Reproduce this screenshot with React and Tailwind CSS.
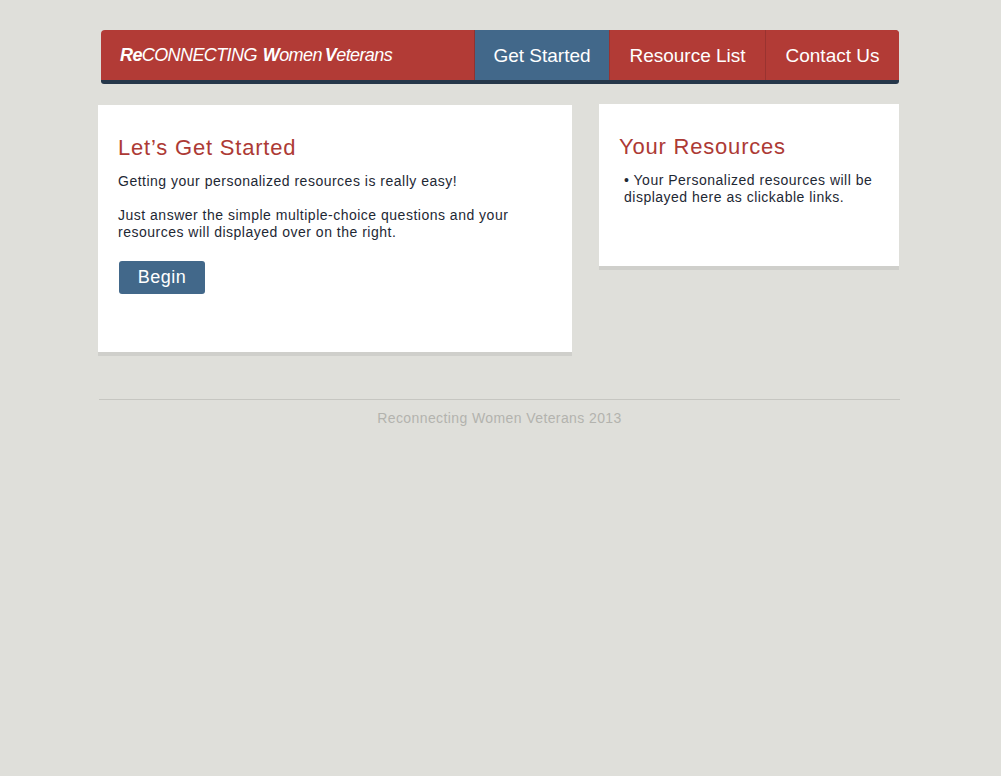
import { useState } from "react";

function App() {
  const [active, setActive] = useState("Get Started");
  const links = [
    { label: "Get Started", w: "w-[135px]" },
    { label: "Resource List", w: "w-[156px]" },
    { label: "Contact Us", w: "w-[134px]" },
  ];

  return (
    <div
      className="min-h-screen bg-[#dfdfda] pt-[30px]"
      style={{ fontFamily: '"Liberation Sans", Arial, sans-serif' }}
    >
      <div className="w-[802px] ml-[98px]">
        {/* Nav */}
        <div className="pl-[3px] pr-[1px]">
          <nav className="flex h-[54px] bg-[#b23b36] rounded-t-[4px] rounded-b-[3px] border-b-4 border-[#26374a] overflow-hidden">
            <div className="flex-1 flex items-center pt-[1px] pl-[19px] text-white text-[18px] italic tracking-[-0.6px]">
              <span className="font-bold">Re</span>
              <span className="font-light">CONNECTING</span>
              <span className="ml-[6px] font-bold">W</span>
              <span>omen</span>
              <span className="ml-[3px] font-bold">V</span>
              <span>eterans</span>
            </div>
            {links.map((l) => (
              <button
                key={l.label}
                onClick={() => setActive(l.label)}
                className={
                  l.w +
                  " pt-[2px] text-center text-[19px] font-light text-white border-l " +
                  (active === l.label
                    ? "bg-[#42688a] border-[#8e3330]"
                    : "bg-[#b23b36] border-[#9a3330]")
                }
              >
                {l.label}
              </button>
            ))}
          </nav>
        </div>

        {/* Cards */}
        <div className="flex items-start gap-[27px] mt-[21px]">
          <section className="w-[474px] h-[251px] bg-white border-b-4 border-[#cfcfcb] px-[20px] pt-[29px]">
            <h1 className="text-[22px] leading-[28px] text-[#ad3a35] tracking-[0.8px] mb-[11px]">
              Let’s Get Started
            </h1>
            <p className="text-[14px] leading-[17px] text-[#1e2834] tracking-[0.5px] mb-[17px]">
              Getting your personalized resources is really easy!
            </p>
            <p className="text-[14px] leading-[17px] text-[#1e2834] tracking-[0.5px] mb-[20px]">
              Just answer the simple multiple-choice questions and your
              resources will displayed over on the right.
            </p>
            <button className="ml-px w-[86px] h-[33px] rounded-[3px] bg-[#42688a] text-white text-[18px] tracking-[0.5px]">
              Begin
            </button>
          </section>

          <section className="w-[300px] h-[166px] bg-white border-b-4 border-[#cfcfcb] px-[20px] pt-[29px] -mt-px">
            <h2 className="text-[22px] leading-[28px] text-[#ad3a35] tracking-[0.8px] mb-[11px]">
              Your Resources
            </h2>
            <p className="pl-[5px] text-[14px] leading-[17px] text-[#1e2834] tracking-[0.5px]">
              • Your Personalized resources will be displayed here as
              clickable links.
            </p>
          </section>
        </div>

        {/* Footer */}
        <footer className="mt-[43px] ml-px border-t border-[#c6c6c1] pt-[9px] text-center text-[14px] leading-[18px] tracking-[0.4px] text-[#b3b3ae]">
          Reconnecting Women Veterans 2013
        </footer>
      </div>
    </div>
  );
}

export default App;
